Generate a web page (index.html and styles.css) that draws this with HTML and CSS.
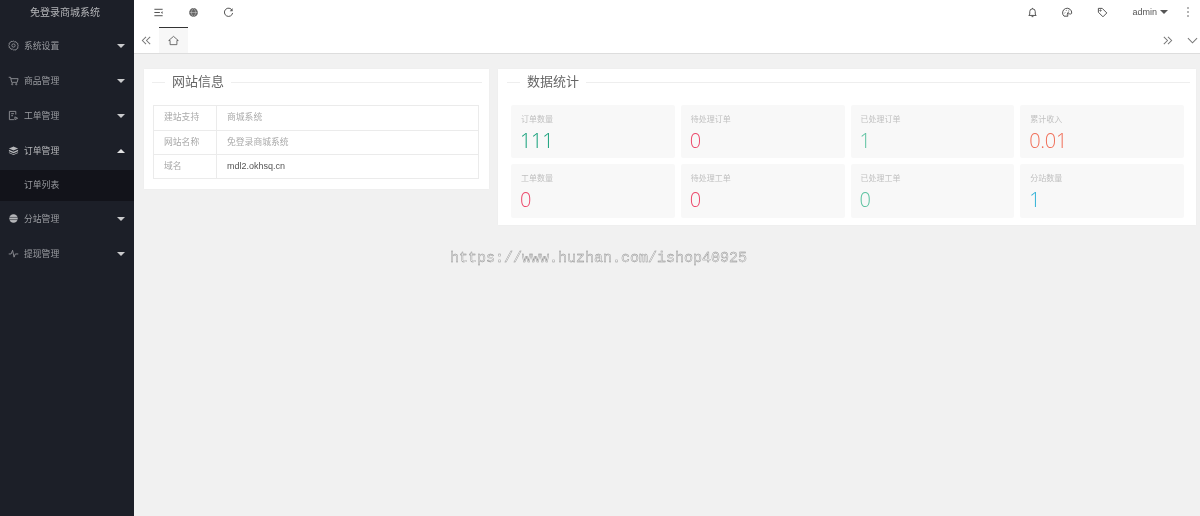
FILE: index.html
```html
<!DOCTYPE html>
<html lang="zh-CN">
<head>
<meta charset="utf-8">
<title>免登录商城系统</title>
<link rel="stylesheet" href="styles.css">
</head>
<body>
<div class="app">
  <aside class="sidebar">
    <div class="brand">免登录商城系统</div>
    <nav class="menu">
      <div class="item"><svg class="mi" viewBox="0 0 12 12"><circle cx="6" cy="6" r="1.800"/><path d="M6 1.200l1.200.9 1.500-.2.7 1.300 1.400.7-.2 1.500.6 1-.6 1 .2 1.500-1.400.7-.7 1.300-1.500-.2L6 10.800l-1.200-.9-1.500.2-.7-1.300-1.400-.7.2-1.500L.8 6l.6-1-.2-1.500 1.400-.7.7-1.300 1.500.2z"/></svg><span>系统设置</span><i class="caret"></i></div>
      <div class="item"><svg class="mi" viewBox="0 0 12 12"><path d="M.8 2.500h2l1.200 5.500h6l1-4H3.200"/><circle cx="4.600" cy="10" r=".7"/><circle cx="9" cy="10" r=".7"/></svg><span>商品管理</span><i class="caret"></i></div>
      <div class="item"><svg class="mi" viewBox="0 0 12 12"><path d="M8.500 5V1.500h-7v9h5"/><path d="M3.500 4h3M3.500 6.200h2"/><path d="M7.500 7.500l3 1.500-3 1.500z"/></svg><span>工单管理</span><i class="caret"></i></div>
      <div class="item open"><svg class="mi solid" viewBox="0 0 12 12"><path d="M6 1.500l5 2.200-5 2.200-5-2.200z"/><path d="M1 5.200l5 2.200 5-2.200v1.600l-5 2.200-5-2.200zM1 8l5 2.200L11 8v.8L6 11 1 8.800z"/></svg><span>订单管理</span><i class="caret up"></i></div>
      <div class="sub">订单列表</div>
      <div class="item"><svg class="mi solid" viewBox="0 0 12 12"><circle cx="6" cy="6" r="4.600"/><path class="cut" d="M1.500 4.800h9M1.500 7.200h9"/></svg><span>分站管理</span><i class="caret"></i></div>
      <div class="item"><svg class="mi" viewBox="0 0 12 12"><path d="M.8 6.500h2.600L5 2.500l1.600 7.500 1.400-3.500h3.200"/></svg><span>提现管理</span><i class="caret"></i></div>
    </nav>
  </aside>
  <div class="main">
    <header class="topbar">
      <div class="tools">
        <svg class="ti" viewBox="0 0 12 12"><path d="M1.500 2.500h9M1.500 6h6M1.500 9.500h9"/><path class="fill" d="M10.500 4.500v3L8.500 6z"/></svg>
        <svg class="ti" viewBox="0 0 12 12"><circle class="fill" cx="6" cy="6" r="4.800"/><path class="cut" d="M1.500 6h9M6 1.500c-3 2.500-3 6.500 0 9M6 1.500c3 2.500 3 6.500 0 9"/></svg>
        <svg class="ti" viewBox="0 0 12 12"><path d="M10 3.600A4.500 4.500 0 1 0 10.500 6.500"/><path class="fill" d="M10.500 1.200v3.300H7.300z"/></svg>
      </div>
      <div class="actions">
        <svg class="ti" viewBox="0 0 12 12"><path d="M2 9.200h8L9 7.800V5a3 3 0 0 0-6 0v2.800zM6 2V1M5 10.500h2"/></svg>
        <svg class="ti" viewBox="0 0 12 12"><path d="M2.200 10A5 5 0 1 1 10.600 6.800c-.5 1.200-1.800.9-2.700.6-1.600-.4-2.100 1.100-1.400 2.600z"/><path d="M2.800 6.600l.8-.5M4.600 4l.4-.8M7.300 3.800l.4-.7M5.500 8l1.800-3"/></svg>
        <svg class="ti" viewBox="0 0 12 12"><path d="M1.500 1.500h4.200l5 5-4.200 4.200-5-5z"/><circle cx="3.800" cy="3.800" r=".7"/></svg>
        <div class="user"><span>admin</span><i class="drop"></i></div>
        <div class="dots"><b></b><b></b><b></b></div>
      </div>
    </header>
    <div class="tabbar">
      <svg class="chev" viewBox="0 0 12 12"><path d="M5.500 2L1.500 6l4 4M10 2L6 6l4 4"/></svg>
      <div class="tab"><svg class="home" viewBox="0 0 12 12"><path d="M.8 6L6 1.500 11.200 6H9.700v4.500H2.300V6z"/></svg></div>
      <div class="spacer"></div>
      <svg class="chev" viewBox="0 0 12 12"><path d="M2 2l4 4-4 4M6.500 2l4 4-4 4"/></svg>
      <svg class="chev down" viewBox="0 0 12 12"><path d="M1 3.500l5 5 5-5"/></svg>
    </div>
    <main class="content">
      <section class="card info">
        <h2 class="legend"><span>网站信息</span></h2>
        <div class="table">
          <div class="cell key">建站支持</div><div class="cell">商城系统</div>
          <div class="cell key">网站名称</div><div class="cell">免登录商城系统</div>
          <div class="cell key last">域名</div><div class="cell last strong">mdl2.okhsq.cn</div>
        </div>
      </section>
      <section class="card stats">
        <h2 class="legend"><span>数据统计</span></h2>
        <div class="grid">
          <div class="tile"><p>订单数量</p><strong class="teal">111</strong></div>
          <div class="tile"><p>待处理订单</p><strong class="rose">0</strong></div>
          <div class="tile"><p>已处理订单</p><strong class="mint">1</strong></div>
          <div class="tile"><p>累计收入</p><strong class="coral">0.01</strong></div>
          <div class="tile"><p>工单数量</p><strong class="rose">0</strong></div>
          <div class="tile"><p>待处理工单</p><strong class="rose">0</strong></div>
          <div class="tile"><p>已处理工单</p><strong class="mint">0</strong></div>
          <div class="tile"><p>分站数量</p><strong class="sky">1</strong></div>
        </div>
      </section>
      <div class="watermark">https://www.huzhan.com/ishop40925</div>
    </main>
  </div>
</div>
</body>
</html>
```
FILE: styles.css
```css
* { box-sizing: border-box; }
html, body { margin: 0; height: 100%; overflow: hidden; }
body { font-family: "Liberation Sans", "Noto Sans CJK SC", sans-serif; background: #f1f1f1; }
.app { display: flex; height: 516px; filter: blur(0.45px); will-change: transform; }

.sidebar { width: 134px; flex: none; background: #1c1f28; color: #9a9ca1; }
.brand { height: 28px; padding: 5px 4px 0 0; text-align: center; font-size: 10px; line-height: 15px; color: #b4b5b8; }
.menu { display: flex; flex-direction: column; }
.item { height: 35px; display: flex; align-items: center; padding: 0 9px 0 8px; font-size: 8.800px; }
.item span { margin-left: 5px; flex: 1; }
.mi { width: 11px; height: 11px; fill: none; stroke: #8f9196; stroke-width: 1; }
.mi.solid { fill: #b5b6b9; stroke: none; }
.mi .cut { fill: none; stroke: #1c1f28; stroke-width: .6; }
.caret { width: 0; height: 0; border-left: 4px solid transparent; border-right: 4px solid transparent; border-top: 4px solid #c9cacc; }
.caret.up { border-top: 0; border-bottom: 4px solid #e2e2e3; }
.open { color: #b5b6b9; }
.sub { height: 31px; margin-top: 2px; padding-left: 24px; background: #12131a; font-size: 8.800px; line-height: 30px; }

.main { flex: 1; min-width: 0; display: flex; flex-direction: column; position: relative; }
.topbar { height: 27px; background: #fff; display: flex; align-items: center; justify-content: space-between; padding: 0 11px 3px 19px; }
.tools { display: flex; gap: 24px; }
.actions { display: flex; align-items: center; gap: 24px; }
.ti { width: 11px; height: 11px; fill: none; stroke: #444; stroke-width: 1; }
.ti .fill { fill: #666; stroke: none; }
.ti .cut { fill: none; stroke: #ccc; stroke-width: .6; }
.user { display: flex; align-items: center; gap: 3px; font-size: 9px; color: #555; margin-right: -4px; }
.drop { width: 0; height: 0; border-left: 4px solid transparent; border-right: 4px solid transparent; border-top: 4px solid #555; }
.dots { display: flex; flex-direction: column; gap: 2px; margin-left: -1px; }
.dots b { width: 2px; height: 2px; background: #b5b5b5; }

.tabbar { height: 27px; background: #fff; border-bottom: 1px solid #ddd; display: flex; align-items: stretch; padding: 0 2px 0 7px; position: relative; }
.chev { width: 11px; height: 11px; fill: none; stroke: #777; stroke-width: 1.100; align-self: center; margin-top: 1px; }
.tab { width: 29px; margin-left: 7px; background: #f7f7f7; border-top: 1px solid #333; display: flex; align-items: center; justify-content: center; }
.home { width: 11px; height: 11px; fill: none; stroke: #555; stroke-width: .9; }
.spacer { flex: 1; }
.chev.down { margin-left: 14px; }

.content { flex: 1; position: relative; display: flex; align-items: flex-start; gap: 9px; padding: 15px 4px 0 10px; background: #f1f1f1; }
.card { background: #fff; box-shadow: 0 0 2px rgba(0,0,0,.03); padding: 0 9px; }
.info { width: 345px; height: 120px; }
.stats { width: 698px; height: 156px; padding: 0 12px 0 13px; }
.legend { margin: 0 -2px 0 -1px; height: 26px; display: flex; align-items: center; font-size: 13px; font-weight: 400; color: #666; gap: 7px; }
.stats .legend { margin: 0 -6px 0 -4px; }
.legend::before { content: ""; width: 13px; height: 1px; background: #eee; }
.legend::after { content: ""; flex: 1; height: 1px; background: #eee; }
.legend span { line-height: 26px; }
.table { display: grid; grid-template-columns: 63px 1fr; margin-top: 10px; border: 1px solid #ebebeb; margin-right: 1px; }
.cell { height: 24.500px; line-height: 23.500px; border-bottom: 1px solid #ebebeb; padding-left: 10px; font-size: 8.800px; color: #aaa; }
.cell.key { border-right: 1px solid #ebebeb; }
.cell.last { border-bottom: 0; height: 23px; }
.cell.strong { color: #555; font-size: 9px; }
.grid { display: grid; grid-template-columns: repeat(4, 1fr); gap: 6px; margin-top: 10px; }
.tile { height: 53px; background: #f8f8f8; border-radius: 2px; padding: 9px 10px 0; }
.tile:nth-child(n+5) { height: 54px; }
.tile p { margin: 0; font-size: 8px; line-height: 11px; color: #c0c0c0; }
.tile strong { display: block; margin-left: -1px; font-family: "Open Sans", "Liberation Sans", sans-serif; font-weight: 300; font-size: 20px; letter-spacing: -.3px; line-height: 24px; margin-top: 4px; }
.teal { color: #14a07a; }
.rose { color: #ec4a6c; }
.mint { color: #5cc2a0; }
.coral { color: #f0705a; }
.sky { color: #2fb1d6; }

.watermark { position: absolute; left: 316px; top: 195px; font-family: "Liberation Mono", monospace; font-size: 15px; line-height: 20px; color: #f1f1f1; -webkit-text-stroke: .4px #8a8a8a; white-space: nowrap; }
```
